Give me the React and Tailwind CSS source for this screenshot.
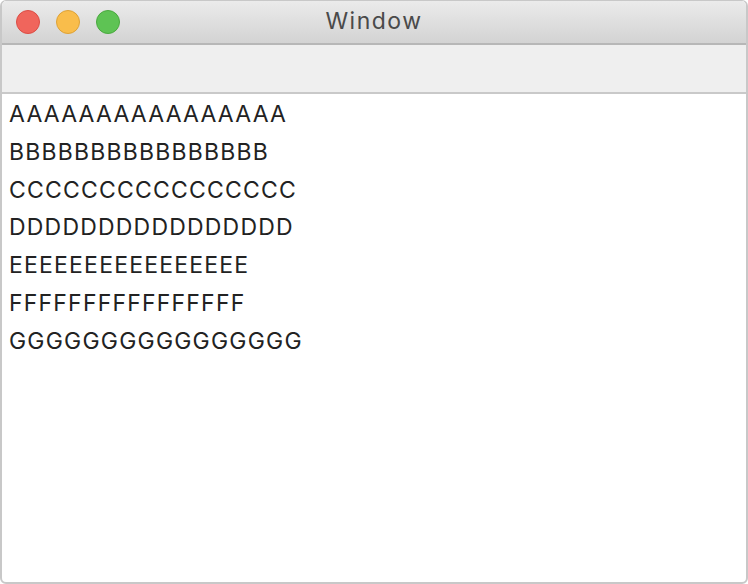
const rows = [
  'AAAAAAAAAAAAAAAA',
  'BBBBBBBBBBBBBBBB',
  'CCCCCCCCCCCCCCCC',
  'DDDDDDDDDDDDDDDD',
  'EEEEEEEEEEEEEEEE',
  'FFFFFFFFFFFFFFFF',
  'GGGGGGGGGGGGGGGG',
];

const Light = ({ className }) => (
  <span className={`block w-[24px] h-[24px] rounded-full border ${className}`} />
);

export default function App() {
  return (
    <div className="w-[748px] h-[584px] bg-white font-['Inter',sans-serif]">
      <div className="w-full h-full flex flex-col overflow-hidden rounded-[6px] border-x-2 border-b-2 border-t border-[#c8c8c8]">
        {/* title bar */}
        <div className="relative h-[44px] shrink-0 flex items-center bg-gradient-to-b from-[#ebebeb] to-[#d3d3d3] border-b-2 border-[#b7b7b7]">
          <div className="flex items-center gap-[16px] pl-[14px] -mt-[1px]">
            <Light className="bg-[#f0655c] border-[#dc4d45]" />
            <Light className="bg-[#f9bd4b] border-[#dea236]" />
            <Light className="bg-[#5ec354] border-[#4aa93f]" />
          </div>
          <div className="absolute inset-0 flex items-center justify-center text-[23px] text-[#4a4a4a] tracking-[1.5px] -mt-[1px]">
            Window
          </div>
        </div>
        {/* toolbar */}
        <div className="h-[49px] shrink-0 bg-[#efefef] border-b-2 border-[#c9c9c9]" />
        {/* list */}
        <div className="flex-1 pl-[7px] pt-[2px] text-[23px] leading-[37.8px] text-[#222222] tracking-[1.2px]">
          {rows.map((r) => (
            <div key={r}>{r}</div>
          ))}
        </div>
      </div>
    </div>
  );
}
